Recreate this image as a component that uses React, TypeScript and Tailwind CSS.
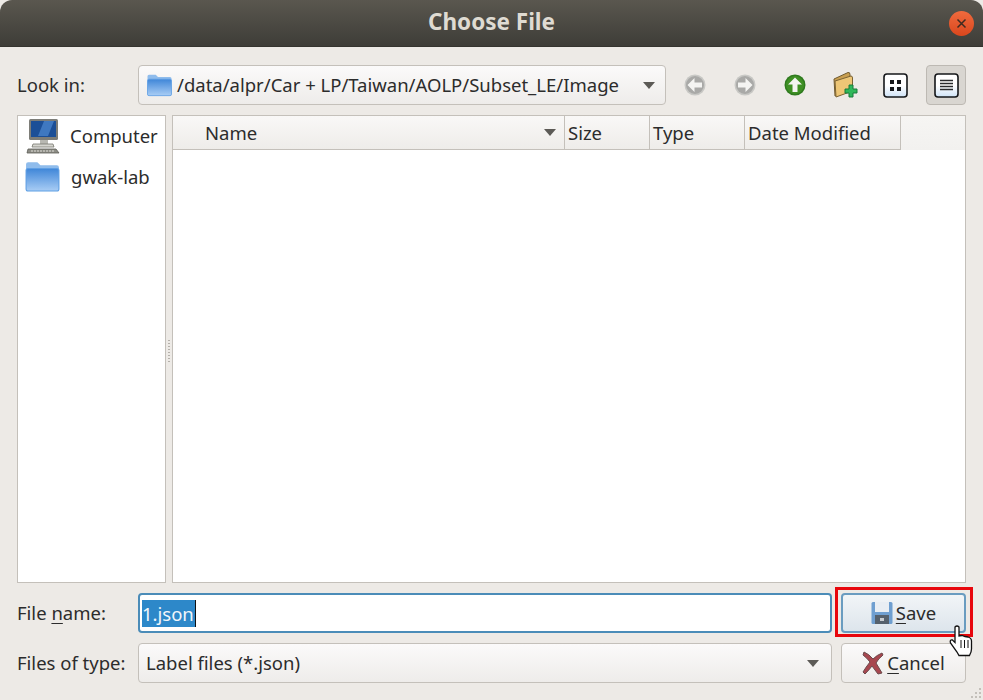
import type { ReactNode } from "react"

const font = "[font-family:'Noto_Sans',sans-serif]"

function FolderIcon({ size = 32 }: { size?: number }) {
  return (
    <svg width={size} height={size * 0.9} viewBox="0 0 36 32">
      <defs>
        <linearGradient id="folderFill" x1="0" y1="0" x2="0" y2="1">
          <stop offset="0" stopColor="#3f86d8" />
          <stop offset="1" stopColor="#a9cdf5" />
        </linearGradient>
      </defs>
      <path d="M2 4 Q2 2 4 2 H13 L16 5 H32 Q34 5 34 7 V28 Q34 30 32 30 H4 Q2 30 2 28 Z" fill="#8fbcec" />
      <rect x="2" y="8" width="32" height="22" rx="2" fill="url(#folderFill)" stroke="#5f9fe4" strokeWidth="1" />
    </svg>
  )
}

function ComputerIcon() {
  return (
    <svg width="34" height="36" viewBox="0 0 34 36">
      <rect x="3" y="1" width="29" height="21" rx="1.5" fill="#7d7d78" />
      <rect x="5" y="3" width="25" height="16" fill="#1c4f97" />
      <path d="M12 18 L18 3 H28 L22 18 Z" fill="#3f78c0" />
      <rect x="14" y="22" width="8" height="4" fill="#b8b8b2" />
      <path d="M7 26 H27 L28 29 H6 Z" fill="#d6d6d0" stroke="#77776f" strokeWidth="0.8" />
      <path d="M2 31 H30 L33 35 H1 Z" fill="#8d8d86" stroke="#5d5d57" strokeWidth="0.8" />
      <path d="M5 33 H29" stroke="#dddcd6" strokeWidth="1" strokeDasharray="2 1" />
    </svg>
  )
}

function ArrowCircle({ dir, fill, ring }: { dir: "left" | "right" | "up"; fill: string; ring: string }) {
  const arrow =
    dir === "left"
      ? "M3.500 11 L10.500 4 V8.500 H18 V13.500 H10.500 V18 Z"
      : dir === "right"
        ? "M18.500 11 L11.500 4 V8.500 H4 V13.500 H11.500 V18 Z"
        : "M11 3.500 L18 10.500 H13.500 V18 H8.500 V10.500 H4 Z"
  return (
    <svg width="22" height="22" viewBox="0 0 22 22">
      <circle cx="11" cy="11" r="10.500" fill={ring} />
      <circle cx="11" cy="11" r="9" fill={fill} />
      <path d={arrow} fill="#f4f4f2" />
    </svg>
  )
}

function NewFolderIcon() {
  return (
    <svg width="28" height="28" viewBox="0 0 28 28">
      <path d="M3 8 L17 1.500 Q19 1 19 3.500 V19 L4 25 Z" fill="#c99f50" stroke="#6f5a30" strokeWidth="1" />
      <path d="M4 10 L20 5 Q21.500 5 21.500 7 V20 L5 26 Z" fill="#edc676" stroke="#7a6233" strokeWidth="1" />
      <path d="M18 14 H22 V18 H26 V22 H22 V26 H18 V22 H14 V18 H18 Z" fill="#2fb85a" stroke="#197a3a" strokeWidth="1" />
    </svg>
  )
}

function ViewFrame({ children }: { children: ReactNode }) {
  return (
    <svg width="25" height="25" viewBox="0 0 25 25">
      <defs>
        <linearGradient id="viewFill" x1="0" y1="0" x2="0" y2="1">
          <stop offset="0.5" stopColor="#ffffff" />
          <stop offset="1" stopColor="#cfe3f7" />
        </linearGradient>
      </defs>
      <rect x="1" y="1" width="23" height="23" rx="3" fill="url(#viewFill)" stroke="#15171a" strokeWidth="1.600" />
      {children}
    </svg>
  )
}

function ChevronDown() {
  return (
    <svg width="12" height="7" viewBox="0 0 12 7">
      <path d="M0 0 H12 L6 7 Z" fill="#5c5a56" />
    </svg>
  )
}

function FloppyIcon() {
  return (
    <svg width="22" height="24" viewBox="0 0 22 24">
      <rect x="0.500" y="1" width="21" height="22" rx="1.500" fill="#6f9fd0" />
      <rect x="4" y="1" width="14" height="10" fill="#e9eef3" />
      <rect x="4" y="14" width="14" height="9" fill="#56616c" />
      <rect x="9" y="17" width="4" height="3" fill="#c8ccd0" />
    </svg>
  )
}

function RedX() {
  return (
    <svg width="22" height="24" viewBox="0 0 22 24">
      <path
        d="M2 1 Q7 3 11 8 Q15 4 20 2 L21 4 Q16 8 14 12 Q17 17 20 22 L16 23 Q13 19 10 15 Q7 19 3 23 L1 21 Q4 16 8 11 Q5 7 1 4 Z"
        fill="#a8474f"
        stroke="#6c4a4c"
        strokeWidth="1"
      />
    </svg>
  )
}

function HandCursor() {
  return (
    <svg width="24" height="32" viewBox="0 0 24 32">
      <path
        d="M6 2 Q8 0 10 2 V11 L13 10.500 L16 11.500 L19 12 Q22.500 13 22.500 16 V24 Q22.500 27 20.500 30.500 H10 L8 27 L1.500 18 Q0.500 14.500 3.500 15 L6 17.500 Z"
        fill="#ffffff"
        stroke="#111111"
        strokeWidth="1.300"
      />
      <path d="M12 15 V23 M15.500 15 V23 M19 15 V23" stroke="#111111" strokeWidth="1" />
    </svg>
  )
}

export default function App() {
  const columns = [
    { label: "Size", width: "w-[85px]" },
    { label: "Type", width: "w-[95px]" },
    { label: "Date Modified", width: "w-[156px]" },
  ]

  return (
    <div className={`relative flex h-[700px] w-[983px] flex-col overflow-hidden bg-[#edeae6] text-[18.5px] text-[#2c2c2c] ${font}`}>
      {/* title bar */}
      <div className="relative flex h-[47px] shrink-0 items-center justify-center rounded-t-[12px] border-b border-[#35342f] bg-gradient-to-b from-[#5a574f] to-[#3e3d38] pb-[2px]">
        <span className="text-[22.5px] font-bold text-[#dfdbd2]">Choose File</span>
        <div className="absolute right-[9px] top-[11px] flex h-[25px] w-[25px] items-center justify-center rounded-full bg-gradient-to-b from-[#ef6a3d] to-[#d9461c] text-[#3d2a20]">
          <svg width="11" height="11" viewBox="0 0 11 11">
            <path d="M1.500 1.500 L9.500 9.500 M9.500 1.500 L1.500 9.500" stroke="currentColor" strokeWidth="1.500" />
          </svg>
        </div>
      </div>

      <div className="flex flex-1 flex-col pl-[17px] pr-[17px] pt-[18px]">
        {/* look in row */}
        <div className="flex h-[40px] items-center">
          <span className="w-[121px] shrink-0">Look in:</span>
          <div className="flex h-[40px] w-[528px] shrink-0 items-center rounded-[4px] border border-[#c4c0ba] bg-gradient-to-b from-[#fbfafa] to-[#eeecea] pl-[7px] pr-[10px]">
            <FolderIcon size={27} />
            <span className="ml-[4px] flex-1 whitespace-nowrap">/data/alpr/Car + LP/Taiwan/AOLP/Subset_LE/Image</span>
            <ChevronDown />
          </div>
          <div className="ml-[18px] flex items-center">
            <div className="flex w-[50px] justify-start">
              <ArrowCircle dir="left" fill="#a9a9a7" ring="#c8c8c5" />
            </div>
            <div className="flex w-[50px] justify-start">
              <ArrowCircle dir="right" fill="#a9a9a7" ring="#c8c8c5" />
            </div>
            <div className="flex w-[47px] justify-start">
              <ArrowCircle dir="up" fill="#3f9024" ring="#2f7a1e" />
            </div>
            <div className="flex w-[52px] justify-start">
              <NewFolderIcon />
            </div>
            <div className="flex w-[43px] justify-start">
              <ViewFrame>
                <rect x="7" y="7" width="4" height="4" fill="#15171a" />
                <rect x="14" y="7" width="4" height="4" fill="#15171a" />
                <rect x="7" y="14" width="4" height="4" fill="#15171a" />
                <rect x="14" y="14" width="4" height="4" fill="#15171a" />
              </ViewFrame>
            </div>
            <div className="flex h-[40px] w-[40px] items-center justify-center rounded-[4px] border border-[#bdb9b3] bg-[#d9d6d1]">
              <ViewFrame>
                <path d="M6 7.500 H19 M6 10.500 H19 M6 13.500 H19 M6 16.500 H19" stroke="#2a2c2e" strokeWidth="1.500" />
              </ViewFrame>
            </div>
          </div>
        </div>

        {/* panels */}
        <div className="mt-[10px] flex h-[468px] gap-[6px]">
          <div className="flex w-[149px] shrink-0 flex-col border border-[#c4c0ba] bg-white pl-[6px]">
            <div className="flex h-[40px] items-center gap-[11px] pl-[2px]">
              <ComputerIcon />
              <span className="-ml-[1px]">Computer</span>
            </div>
            <div className="flex h-[40px] items-center gap-[10px] pt-[2px]">
              <FolderIcon size={37} />
              <span>gwak-lab</span>
            </div>
          </div>
          <div className="relative flex flex-1 flex-col border border-[#c4c0ba] bg-white">
            <div className="flex h-[34px] shrink-0 bg-gradient-to-b from-[#f9f8f7] to-[#eeece9]">
              <div className="flex w-[392px] items-center justify-between border-b border-r border-[#c4c0ba] pl-[32px] pr-[8px]">
                <span>Name</span>
                <ChevronDown />
              </div>
              {columns.map((col) => (
                <div key={col.label} className={`flex ${col.width} items-center border-b border-r border-[#c4c0ba] pl-[3px] last:border-r-0`}>
                  {col.label}
                </div>
              ))}
              <div className="flex-1 bg-gradient-to-b from-[#f6f5f3] to-[#f2f1ef]" />
            </div>
            <div className="flex-1 bg-white" />
            {/* splitter handle */}
            <div className="absolute -left-[5px] top-[224px] flex flex-col gap-[2px]">
              {Array.from({ length: 8 }).map((_, i) => (
                <div key={i} className="h-[1px] w-[2px] bg-[#b5b1ab]" />
              ))}
            </div>
          </div>
        </div>

        {/* file name row */}
        <div className="mt-[10px] flex h-[40px] items-center">
          <span className="w-[121px] shrink-0">
            File <span className="underline underline-offset-[3px]">n</span>ame:
          </span>
          <div className="flex h-[40px] w-[694px] shrink-0 items-center rounded-[4px] border-2 border-[#4b8cb8] bg-white pl-[2px]">
            <span className="bg-[#2d88c9] pr-[1px] leading-[27px] text-[#f2f6fa]">1.json</span>
            <span className="h-[27px] w-[1px] bg-[#111111]" />
          </div>
          <div className="ml-[9px] flex h-[40px] w-[125px] shrink-0 items-center justify-center gap-[3px] rounded-[4px] border-2 border-[#6a9cc0] bg-gradient-to-b from-[#f2f5f7] to-[#dde5ec]">
            <FloppyIcon />
            <span>
              <span className="underline underline-offset-[3px]">S</span>ave
            </span>
          </div>
        </div>

        {/* files of type row */}
        <div className="mt-[10px] flex h-[40px] items-center">
          <span className="w-[121px] shrink-0">Files of type:</span>
          <div className="flex h-[40px] w-[694px] shrink-0 items-center justify-between rounded-[4px] border border-[#c4c0ba] bg-gradient-to-b from-[#fbfafa] to-[#eeecea] pl-[7px] pr-[12px]">
            <span>Label files (*.json)</span>
            <ChevronDown />
          </div>
          <div className="ml-[9px] flex h-[40px] w-[125px] shrink-0 items-center justify-center gap-[3px] rounded-[4px] border border-[#c4c0ba] bg-gradient-to-b from-[#fbfafa] to-[#eeecea]">
            <RedX />
            <span>
              <span className="underline underline-offset-[3px]">C</span>ancel
            </span>
          </div>
        </div>
      </div>

      {/* annotation box around save */}
      <div className="absolute left-[835px] top-[587px] h-[50px] w-[138px] border-[3px] border-[#e8060c]" />

      {/* mouse cursor */}
      <div className="absolute left-[949px] top-[625px]">
        <HandCursor />
      </div>

      {/* size grip */}
      <div className="absolute bottom-[2px] right-[2px] grid grid-cols-3 gap-[2px]">
        {[0, 0, 1, 0, 1, 1, 1, 1, 1].map((on, i) => (
          <div key={i} className={on ? "h-[2px] w-[2px] bg-[#c4c0ba]" : "h-[2px] w-[2px]"} />
        ))}
      </div>
    </div>
  )
}
